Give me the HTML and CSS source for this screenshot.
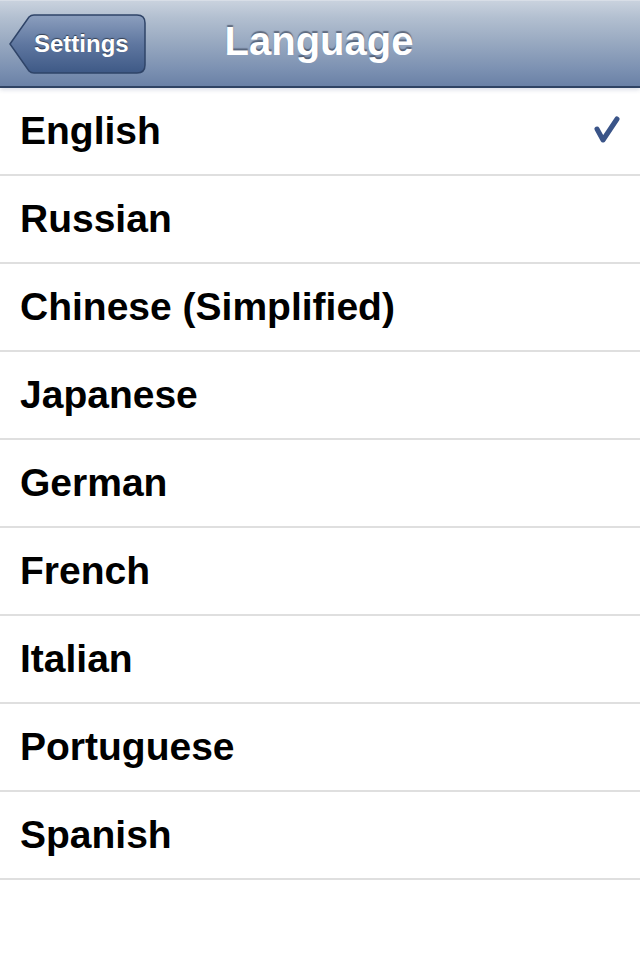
FILE: index.html
```html
<!DOCTYPE html>
<html>
<head>
<meta charset="utf-8">
<link rel="stylesheet" href="styles.css">
</head>
<body>
<header class="navbar">
  <a class="back">
    <svg class="back-shape" width="138" height="60" viewBox="0 0 138 60">
      <defs>
        <linearGradient id="bg" x1="0" y1="0" x2="0" y2="1">
          <stop offset="0" stop-color="#8c9fbe"/>
          <stop offset="0.5" stop-color="#5f77a0"/>
          <stop offset="1" stop-color="#3e5986"/>
        </linearGradient>
      </defs>
      <path d="M1 30 L20 3 Q22 1 25 1 L128 1 Q136 1 136 9 L136 51 Q136 59 128 59 L25 59 Q22 59 20 57 Z" fill="url(#bg)" stroke="#2f4468" stroke-width="1.5"/>
    </svg>
    <span class="back-label">Settings</span>
  </a>
  <h1 class="title">Language</h1>
</header>
<ul class="list">
  <li class="row"><span>English</span>
    <svg class="check" width="30" height="30" viewBox="0 0 30 30"><path d="M5 14 L11 25 L25 4" fill="none" stroke="#3a5488" stroke-width="5" stroke-linecap="round" stroke-linejoin="round"/></svg>
  </li>
  <li class="row"><span>Russian</span></li>
  <li class="row"><span>Chinese (Simplified)</span></li>
  <li class="row"><span>Japanese</span></li>
  <li class="row"><span>German</span></li>
  <li class="row"><span>French</span></li>
  <li class="row"><span>Italian</span></li>
  <li class="row"><span>Portuguese</span></li>
  <li class="row"><span>Spanish</span></li>
</ul>
</body>
</html>
```
FILE: styles.css
```css
html, body {
  margin: 0;
  padding: 0;
  background: #ffffff;
  font-family: "Liberation Sans", Arial, sans-serif;
}
.navbar {
  position: relative;
  height: 88px;
  box-sizing: border-box;
  background: linear-gradient(to bottom, #c9d2de 0%, #b2bfd0 20%, #97a8c0 50%, #7c91b2 80%, #6a81a6 100%);
  border-top: 1px solid #d8dee7;
  border-bottom: 2px solid #2f4363;
  display: flex;
  align-items: center;
  justify-content: center;
  box-shadow: 0 2px 4px rgba(60, 80, 120, 0.18);
  z-index: 1;
}
.back {
  position: absolute;
  left: 9px;
  top: 13px;
  width: 138px;
  height: 60px;
  display: flex;
  align-items: center;
}
.back-shape {
  position: absolute;
  left: 0;
  top: 0;
}
.back-label {
  position: relative;
  padding-left: 25px;
  font-size: 24px;
  font-weight: bold;
  color: #ffffff;
  text-shadow: 0 -1px 1px rgba(0, 0, 0, 0.5);
}
.title {
  margin: 0;
  font-size: 40px;
  font-weight: bold;
  color: #ffffff;
  text-shadow: 0 -2px 1px rgba(40, 50, 70, 0.55);
  position: relative;
  top: -2px;
  left: -1px;
}
.list {
  list-style: none;
  margin: 0;
  padding: 0;
}
.row {
  height: 88px;
  box-sizing: border-box;
  border-bottom: 2px solid #dfdfdf;
  display: flex;
  align-items: center;
  justify-content: space-between;
  padding: 0 18px 0 20px;
  font-size: 39px;
  font-weight: bold;
  color: #000000;
}
.check {
  display: block;
  margin-top: -2px;
}
```
